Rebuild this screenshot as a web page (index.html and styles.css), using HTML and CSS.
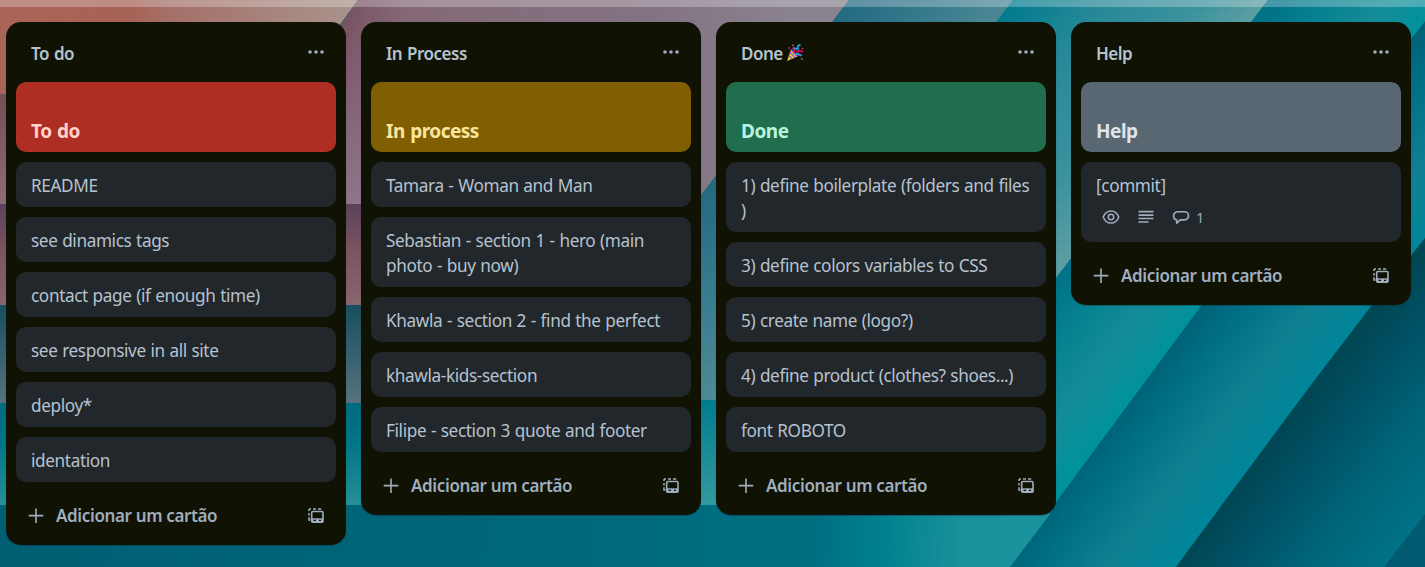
FILE: index.html
```
<!DOCTYPE html>
<html lang="pt-BR">
<head>
<meta charset="utf-8">
<title>Board</title>
<link rel="stylesheet" href="styles.css">
</head>
<body>
<svg class="wallpaper" viewBox="0 0 1425 567" preserveAspectRatio="none" aria-hidden="true">
  <defs>
    <linearGradient id="orange" gradientUnits="userSpaceOnUse" x1="0" y1="0" x2="350" y2="0"><stop offset="0" stop-color="#ac6657"/><stop offset=".38" stop-color="#a96458"/><stop offset=".48" stop-color="#a7716a"/><stop offset="1" stop-color="#ab958d"/></linearGradient>
    <linearGradient id="mauve" gradientUnits="userSpaceOnUse" x1="340" y1="0" x2="790" y2="0"><stop offset="0" stop-color="#795261"/><stop offset=".15" stop-color="#876a79"/><stop offset=".7" stop-color="#857584"/><stop offset="1" stop-color="#8c8390"/></linearGradient>
    <linearGradient id="mauveDown" gradientUnits="userSpaceOnUse" x1="0" y1="20" x2="0" y2="204"><stop offset="0" stop-color="#957b93" stop-opacity="0"/><stop offset="1" stop-color="#957b93" stop-opacity=".85"/></linearGradient>
    <linearGradient id="plum" x1="0" y1="0" x2="0" y2="1"><stop offset="0" stop-color="#755054"/><stop offset="1" stop-color="#906e79"/></linearGradient>
    <linearGradient id="wine" x1="0" y1="0" x2="0" y2="1"><stop offset="0" stop-color="#5d425a"/><stop offset=".45" stop-color="#7b5562"/><stop offset="1" stop-color="#8a6870"/></linearGradient>
    <linearGradient id="slate" x1="0" y1="0" x2="0" y2="1"><stop offset="0" stop-color="#17505f"/><stop offset="1" stop-color="#5a7381"/></linearGradient>
    <linearGradient id="teal" x1="0" y1="0" x2="0" y2="1"><stop offset="0" stop-color="#006b80"/><stop offset=".4" stop-color="#007787"/><stop offset="1" stop-color="#289299"/></linearGradient>
    <linearGradient id="tealRight" x1="0" y1="0" x2="0" y2="1"><stop offset="0" stop-color="#007e90"/><stop offset="1" stop-color="#359ba2"/></linearGradient>
    <linearGradient id="floor" gradientUnits="userSpaceOnUse" x1="0" y1="0" x2="1048" y2="80"><stop offset="0" stop-color="#005f73"/><stop offset=".45" stop-color="#00667a"/><stop offset=".81" stop-color="#007083"/><stop offset=".88" stop-color="#008391"/><stop offset=".95" stop-color="#1b929d"/><stop offset="1" stop-color="#1a959f"/></linearGradient>
    <linearGradient id="bandB" gradientUnits="userSpaceOnUse" x1="700" y1="190" x2="775" y2="400"><stop offset="0" stop-color="#256b82"/><stop offset=".45" stop-color="#397d90"/><stop offset="1" stop-color="#528f9b"/></linearGradient>
    <linearGradient id="bandBTop" gradientUnits="userSpaceOnUse" x1="831" y1="15" x2="934" y2="95"><stop offset="0" stop-color="#216a82"/><stop offset="1" stop-color="#4b8998"/></linearGradient>
    <linearGradient id="bandC" gradientUnits="userSpaceOnUse" x1="997" y1="22" x2="1153" y2="142"><stop offset="0" stop-color="#007d90"/><stop offset=".4" stop-color="#2a8b9a"/><stop offset=".75" stop-color="#3c94a0"/><stop offset="1" stop-color="#5b9fa4"/></linearGradient>
    <linearGradient id="bandD" gradientUnits="userSpaceOnUse" x1="1038" y1="305" x2="1140" y2="385"><stop offset="0" stop-color="#007489"/><stop offset=".35" stop-color="#078493"/><stop offset=".65" stop-color="#158d99"/><stop offset="1" stop-color="#00949f"/></linearGradient>
    <linearGradient id="bandE" gradientUnits="userSpaceOnUse" x1="1202" y1="305" x2="1308" y2="388"><stop offset="0" stop-color="#006278"/><stop offset=".25" stop-color="#007187"/><stop offset=".65" stop-color="#0f8294"/><stop offset="1" stop-color="#00879b"/></linearGradient>
    <linearGradient id="bandF" gradientUnits="userSpaceOnUse" x1="1215" y1="514" x2="1346" y2="617"><stop offset="0" stop-color="#004654"/><stop offset=".25" stop-color="#005266"/><stop offset=".6" stop-color="#00657a"/><stop offset="1" stop-color="#007489"/></linearGradient>
    <pattern id="weave" width="3" height="4" patternUnits="userSpaceOnUse"><path d="M0 0h1v4H0zM0 0h3v1H0z" fill="#001c28" fill-opacity=".03"/></pattern>
  </defs>
  <path fill="url(#orange)" d="M0 0H358L270 120H0z"/>
  <path fill="url(#mauve)" d="M358 0H849L690 210H210z"/>
  <path fill="url(#mauveDown)" d="M300 20H600V210H300z"/>
  <path fill="url(#plum)" d="M0 94H300V204H0z"/>
  <path fill="url(#wine)" d="M0 204H600V305H0z"/>
  <path fill="url(#slate)" d="M0 305H600V404H0z"/>
  <path fill="url(#teal)" d="M0 403H600V506H0z"/>
  <path fill="url(#bandB)" d="M849 0H1013L880 400H600V330z"/>
  <path fill="url(#bandBTop)" d="M849 0H1013L960 70H796z"/>
  <path fill="url(#tealRight)" d="M600 400H1000V505H600z"/>
  <path fill="url(#floor)" d="M0 505H1080L1010 567H0z"/>
  <path fill="url(#bandC)" d="M1013 0H1268L1060 273L900 480V150z"/>
  <path fill="url(#bandD)" d="M1268 0H1442L1202 305L1060 497L1050 510H950V418z"/>
  <path fill="url(#bandE)" d="M1442 0L1202 305L1060 497L1048 517L1010 567H1176L1293 410L1425 238V0z"/>
  <path fill="url(#bandF)" d="M1425 238L1372 305L1320 373L1293 409L1176 567H1425z"/>
  <path fill="#005b72" d="M1425 514L1384 567H1425z"/>
  <path fill="url(#weave)" d="M0 0H1425V567H0z"/>
  <path fill="#fff" fill-opacity=".27" d="M0 0H1425V7H0z"/>
</svg>
<svg class="sprite" aria-hidden="true">
  <symbol id="i-more" viewBox="0 0 20 20"><g fill="currentColor"><circle cx="4" cy="10" r="1.8"/><circle cx="10" cy="10" r="1.8"/><circle cx="16" cy="10" r="1.8"/></g></symbol>
  <symbol id="i-plus" viewBox="0 0 20 20"><path d="M10 2.500v14.500M2.700 9.600h14.600" fill="none" stroke="currentColor" stroke-width="1.600"/></symbol>
  <symbol id="i-template" viewBox="0 0 20 20"><path d="M3 2.900h2M7 2.900h3M12 2.900h3.200M3 2.900v2M3 6.900v2.500M3 11.200v2.800h1.500" fill="none" stroke="currentColor" stroke-width="1.500"/><rect x="5.700" y="5.500" width="11.300" height="10.800" rx="1" fill="none" stroke="currentColor" stroke-width="1.600"/><path d="M5.700 12.300h11.300V16.300h-11.300z" fill="currentColor"/><path d="M7.500 14.300h2.500M13 14.300h2" stroke="#101204" stroke-width="1.200"/></symbol>
  <symbol id="i-eye" viewBox="0 0 20 20"><g fill="none" stroke="currentColor" stroke-width="1.500"><path d="M2.200 10C3.700 6 6.500 3.900 10 3.900S16.300 6 17.800 10C16.300 14 13.500 16.100 10 16.100S3.700 14 2.200 10z"/><circle cx="10" cy="10" r="2.700"/></g></symbol>
  <symbol id="i-text" viewBox="0 0 20 20"><path d="M2.500 4.700h15M2.500 8.100h15M2.500 11.500h15M2.500 15h10" stroke="currentColor" stroke-width="1.700"/></symbol>
  <symbol id="i-comment" viewBox="0 0 20 20"><path d="M7 4.700h6.500A4 4 0 0 1 17.500 8.700 4 4 0 0 1 13.500 12.900h-4.300L5.700 16.300V13A4.300 4.300 0 0 1 2.500 8.900 4.200 4.200 0 0 1 7 4.700z" fill="none" stroke="currentColor" stroke-width="1.600" stroke-linejoin="round"/></symbol>
  <symbol id="i-party" viewBox="0 0 18 18"><path d="M5 5.500L1 17l10.500-4.500z" fill="#f9c23c"/><path d="M4 8.300l5.200 5.200M2.800 11.600l3.500 3.400M5 5.500l6.500 7" stroke="#7b66c9" stroke-width="1.400"/><path d="M7.500 8.500Q9.500 6 6.500 3.500M10.500 8.500Q13 5 17 8M11 11q3-1 5 .7" fill="none" stroke="#f10070" stroke-width="1.900"/><path d="M8 3.500q1.500 2 4 1.200Q10.500 1.500 14.500 1M10 10q3-.6 5 2" fill="none" stroke="#13a7e8" stroke-width="1.900"/><g fill="#e8447f"><circle cx="3" cy="4" r=".8"/><circle cx="16.500" cy="4.500" r=".8"/></g><g fill="#f9a43c"><circle cx="7" cy="1.200" r=".8"/><circle cx="16" cy="15" r=".8"/></g></symbol>
</svg>
<main class="board">
  <section class="list">
    <header class="list-header"><h2>To do</h2><svg class="icon"><use href="#i-more"/></svg></header>
    <article class="cover red">To do</article>
    <article class="card">README</article>
    <article class="card">see dinamics tags</article>
    <article class="card">contact page (if enough time)</article>
    <article class="card">see responsive in all site</article>
    <article class="card">deploy*</article>
    <article class="card">identation</article>
    <footer class="add"><svg class="icon"><use href="#i-plus"/></svg><span class="add-label">Adicionar um cartão</span><svg class="icon"><use href="#i-template"/></svg></footer>
  </section>
  <section class="list">
    <header class="list-header"><h2>In Process</h2><svg class="icon"><use href="#i-more"/></svg></header>
    <article class="cover yellow">In process</article>
    <article class="card">Tamara - Woman and Man</article>
    <article class="card">Sebastian - section 1 - hero (main<br>photo - buy now)</article>
    <article class="card">Khawla - section 2 - find the perfect</article>
    <article class="card">khawla-kids-section</article>
    <article class="card">Filipe - section 3 quote and footer</article>
    <footer class="add"><svg class="icon"><use href="#i-plus"/></svg><span class="add-label">Adicionar um cartão</span><svg class="icon"><use href="#i-template"/></svg></footer>
  </section>
  <section class="list">
    <header class="list-header"><h2>Done<svg class="party"><use href="#i-party"/></svg></h2><svg class="icon"><use href="#i-more"/></svg></header>
    <article class="cover green">Done</article>
    <article class="card">1) define boilerplate (folders and files<br>)</article>
    <article class="card">3) define colors variables to CSS</article>
    <article class="card">5) create name (logo?)</article>
    <article class="card">4) define product (clothes? shoes...)</article>
    <article class="card">font ROBOTO</article>
    <footer class="add"><svg class="icon"><use href="#i-plus"/></svg><span class="add-label">Adicionar um cartão</span><svg class="icon"><use href="#i-template"/></svg></footer>
  </section>
  <section class="list">
    <header class="list-header"><h2>Help</h2><svg class="icon"><use href="#i-more"/></svg></header>
    <article class="cover gray">Help</article>
    <article class="card">[commit]
      <div class="badges"><svg class="icon"><use href="#i-eye"/></svg><svg class="icon"><use href="#i-text"/></svg><span class="badge"><svg class="icon"><use href="#i-comment"/></svg>1</span></div>
    </article>
    <footer class="add"><svg class="icon"><use href="#i-plus"/></svg><span class="add-label">Adicionar um cartão</span><svg class="icon"><use href="#i-template"/></svg></footer>
  </section>
</main>
</body>
</html>
```
FILE: styles.css
```
* { box-sizing: border-box; }
body {
  margin: 0;
  width: 1425px;
  height: 567px;
  overflow: hidden;
  background: #005f73;
  font-family: "Segoe UI", "Noto Sans", "Open Sans", sans-serif;
  color: #b6c2cf;
}
.wallpaper { position: absolute; inset: 0; width: 1425px; height: 567px; }
.sprite { position: absolute; width: 0; height: 0; }
.board {
  position: relative;
  display: flex;
  align-items: flex-start;
  gap: 15px;
  padding: 22px 0 0 6px;
}
.list {
  display: flex;
  flex-direction: column;
  gap: 10px;
  flex: 0 0 340px;
  padding: 0 10px;
  border-radius: 15px;
  background: #101204;
  box-shadow: 0 1px 1px rgba(9, 30, 66, .35);
}
.icon { width: 20px; height: 20px; flex: none; display: block; color: #9fadbc; }
.list-header {
  display: flex;
  align-items: flex-start;
  justify-content: space-between;
  height: 50px;
  padding: 20px 10px 0 15px;
}
.list-header h2 {
  display: flex;
  align-items: center;
  margin: -1px 0 0;
  font-size: 17px;
  font-weight: 600;
  line-height: 25px;
  letter-spacing: -.5px;
  word-spacing: 1px;
}
.party { width: 18px; height: 18px; margin: -1px 0 0 3px; }
.cover {
  display: flex;
  align-items: flex-end;
  height: 70px;
  padding: 0 15px 8px;
  border-radius: 10px;
  font-size: 19px;
  font-weight: 700;
  line-height: 25px;
  letter-spacing: -.5px;
  word-spacing: 1px;
}
.red { background: #ae2e24; color: #ffd2cc; }
.yellow { background: #7f5f01; color: #f8e6a0; }
.green { background: #216e4e; color: #baf3db; }
.gray { background: #596773; color: #dee4ea; }
.card {
  padding: 11px 15px 9px;
  border-radius: 10px;
  background: #22272b;
  font-size: 17.200px;
  line-height: 25px;
  letter-spacing: -.38px;
  word-spacing: .6px;
  white-space: nowrap;
}
.badges { display: flex; gap: 15px; padding: 9px 5px 6px; }
.badge {
  display: flex;
  gap: 5px;
  line-height: 20px;
  font-size: 14.500px;
  color: #9fadbc;
}
.add {
  display: flex;
  align-items: center;
  height: 53px;
  padding: 0 10px 6px;
  color: #9fadbc;
}
.add-label {
  flex: 1;
  padding-left: 10px;
  font-size: 17px;
  font-weight: 600;
  line-height: 25px;
  letter-spacing: -.36px;
}
```
